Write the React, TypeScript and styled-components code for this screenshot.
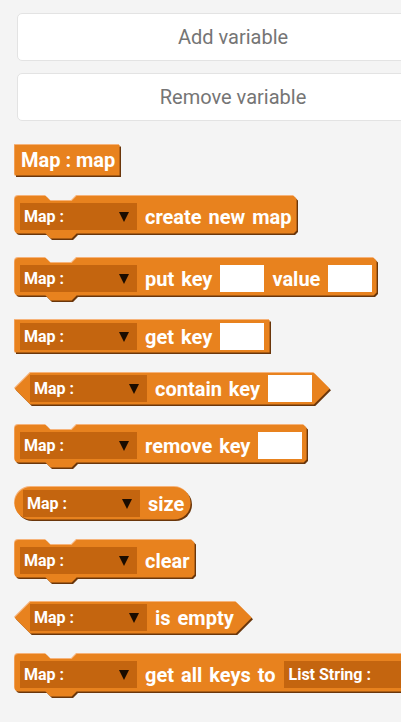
import React, { useLayoutEffect, useRef, useState } from "react";
import styled, { createGlobalStyle, css } from "styled-components";

const Global = createGlobalStyle`
  html, body { margin: 0; padding: 0; background: #f4f4f4; overflow: hidden; }
  body { width: 401px; height: 722px; font-family: Roboto, "Noto Sans", "Liberation Sans", sans-serif; }
`;

type Kind = "stack" | "rect" | "hex" | "pill" | "var";

const ORANGE = "#e8821e";
const LIGHT = "#f6b37a";
const DARK = "#6a360b";
const FIELD = "#c4650f";

function shapePath(kind: Kind, w: number, h: number): string {
  switch (kind) {
    case "stack": {
      const d = 5, a = 31, b = 36, c = 57, e = 62;
      return `M0,4 Q0,0 4,0 H${a} L${b},${d} H${c} L${e},0 H${w - 3} L${w},3 V${h - 3} L${w - 3},${h} H${e} L${c},${h + d} H${b} L${a},${h} H4 Q0,${h} 0,${h - 4} Z`;
    }
    case "hex": {
      const s = h / 2;
      return `M${s},0 H${w - s} L${w},${s} L${w - s},${h} H${s} L0,${s} Z`;
    }
    case "pill": {
      const r = h / 2;
      return `M${r},0 H${w - r} A${r},${r} 0 0 1 ${w - r},${h} H${r} A${r},${r} 0 0 1 ${r},0 Z`;
    }
    default:
      return `M0,0 H${w} V${h} H0 Z`;
  }
}

const Page = styled.div`
  display: flex;
  flex-direction: column;
  padding-top: 13px;
`;

const ButtonStack = styled.div`
  display: flex;
  flex-direction: column;
  gap: 12px;
  padding-left: 17px;
`;

const VarButton = styled.button`
  width: 432px;
  height: 48px;
  flex-shrink: 0;
  box-sizing: border-box;
  background: #ffffff;
  border: 1px solid #e3e3e3;
  border-radius: 5px;
  padding: 0;
  font: 400 20px Roboto, "Noto Sans", sans-serif;
  color: #757575;
  display: flex;
  align-items: center;
  justify-content: center;
`;

const Palette = styled.div`
  display: flex;
  flex-direction: column;
  align-items: flex-start;
  gap: 18px;
  padding: 23px 0 0 14px;
`;

const kindStyles: Record<Kind, ReturnType<typeof css>> = {
  stack: css`height: 40px; padding: 8px 6px 5px 6px; margin-bottom: 4px;`,
  rect: css`height: 35px; padding: 4px 7px 4px 6px;`,
  hex: css`height: 34px; padding: 3px 19px 4px 16px;`,
  pill: css`height: 35px; padding: 4px 8px 4px 9px;`,
  var: css`height: 33px; padding: 0 6px 2px 7px;`,
};

const BlockBox = styled.div<{ $kind: Kind }>`
  position: relative;
  display: inline-flex;
  align-items: center;
  gap: 8px;
  box-sizing: border-box;
  flex-shrink: 0;
  white-space: nowrap;
  ${(p) => kindStyles[p.$kind]}
`;

const ShapeSvg = styled.svg`
  position: absolute;
  left: 0;
  top: 0;
  overflow: visible;
  pointer-events: none;
  z-index: 0;
`;

const Label = styled.span<{ $tight?: boolean }>`
  position: relative;
  z-index: 1;
  font: 700 20px Roboto, "Noto Sans", sans-serif;
  line-height: 1;
  color: #ffffff;
  word-spacing: ${(p) => (p.$tight ? "0" : "2px")};
`;

const Dropdown = styled.div`
  position: relative;
  z-index: 1;
  width: 117px;
  height: 27px;
  box-sizing: border-box;
  background: ${FIELD};
  display: flex;
  align-items: center;
  justify-content: space-between;
  padding: 0 8px 0 4px;
  font: 700 16px Roboto, "Noto Sans", sans-serif;
  color: #ffffff;
`;

const Field = styled.div<{ $w: number }>`
  position: relative;
  z-index: 1;
  width: ${(p) => p.$w}px;
  height: 27px;
  box-sizing: border-box;
  background: ${FIELD};
  display: flex;
  align-items: center;
  padding-left: 5px;
  font: 700 16px Roboto, "Noto Sans", sans-serif;
  color: #ffffff;
  flex-shrink: 0;
`;

const Input = styled.div`
  position: relative;
  z-index: 1;
  width: 44px;
  height: 27px;
  background: #ffffff;
  flex-shrink: 0;
`;

const Arrow = () => (
  <svg width="10" height="10" viewBox="0 0 10 10">
    <polygon points="0,0 10,0 5,10" fill="#1a0c00" />
  </svg>
);

const Block: React.FC<{ kind: Kind; children: React.ReactNode }> = ({ kind, children }) => {
  const ref = useRef<HTMLDivElement>(null);
  const [size, setSize] = useState({ w: 0, h: 0 });
  useLayoutEffect(() => {
    const el = ref.current;
    if (!el) return;
    const update = () => setSize({ w: el.offsetWidth, h: el.offsetHeight });
    update();
    const ro = new ResizeObserver(update);
    ro.observe(el);
    return () => ro.disconnect();
  }, []);
  const w = Math.max(size.w - 2, 0);
  const h = Math.max(size.h - 2.5, 0);
  const d = shapePath(kind, w, h);
  return (
    <BlockBox ref={ref} $kind={kind}>
      {size.w > 0 && (
        <ShapeSvg width={size.w + 2} height={size.h + 8}>
          <path d={d} transform="translate(2,2.5)" fill={DARK} />
          <path d={d} fill={LIGHT} />
          <path d={d} transform="translate(0.6,1)" fill={ORANGE} />
        </ShapeSvg>
      )}
      {children}
    </BlockBox>
  );
};

const MapDrop = () => (
  <Dropdown>
    <span>Map :</span>
    <Arrow />
  </Dropdown>
);

export default function App() {
  return (
    <>
      <Global />
      <Page>
        <ButtonStack>
          <VarButton>Add variable</VarButton>
          <VarButton>Remove variable</VarButton>
        </ButtonStack>
        <Palette>
          <Block kind="var">
            <Label $tight>Map : map</Label>
          </Block>
          <Block kind="stack">
            <MapDrop />
            <Label>create new map</Label>
          </Block>
          <Block kind="stack">
            <MapDrop />
            <Label>put key</Label>
            <Input />
            <Label>value</Label>
            <Input />
          </Block>
          <Block kind="rect">
            <MapDrop />
            <Label>get key</Label>
            <Input />
          </Block>
          <Block kind="hex">
            <MapDrop />
            <Label>contain key</Label>
            <Input />
          </Block>
          <Block kind="stack">
            <MapDrop />
            <Label>remove key</Label>
            <Input />
          </Block>
          <Block kind="pill">
            <MapDrop />
            <Label>size</Label>
          </Block>
          <Block kind="stack">
            <MapDrop />
            <Label>clear</Label>
          </Block>
          <Block kind="hex">
            <MapDrop />
            <Label>is empty</Label>
          </Block>
          <Block kind="stack">
            <MapDrop />
            <Label>get all keys to</Label>
            <Field $w={140}>List String :</Field>
          </Block>
        </Palette>
      </Page>
    </>
  );
}
